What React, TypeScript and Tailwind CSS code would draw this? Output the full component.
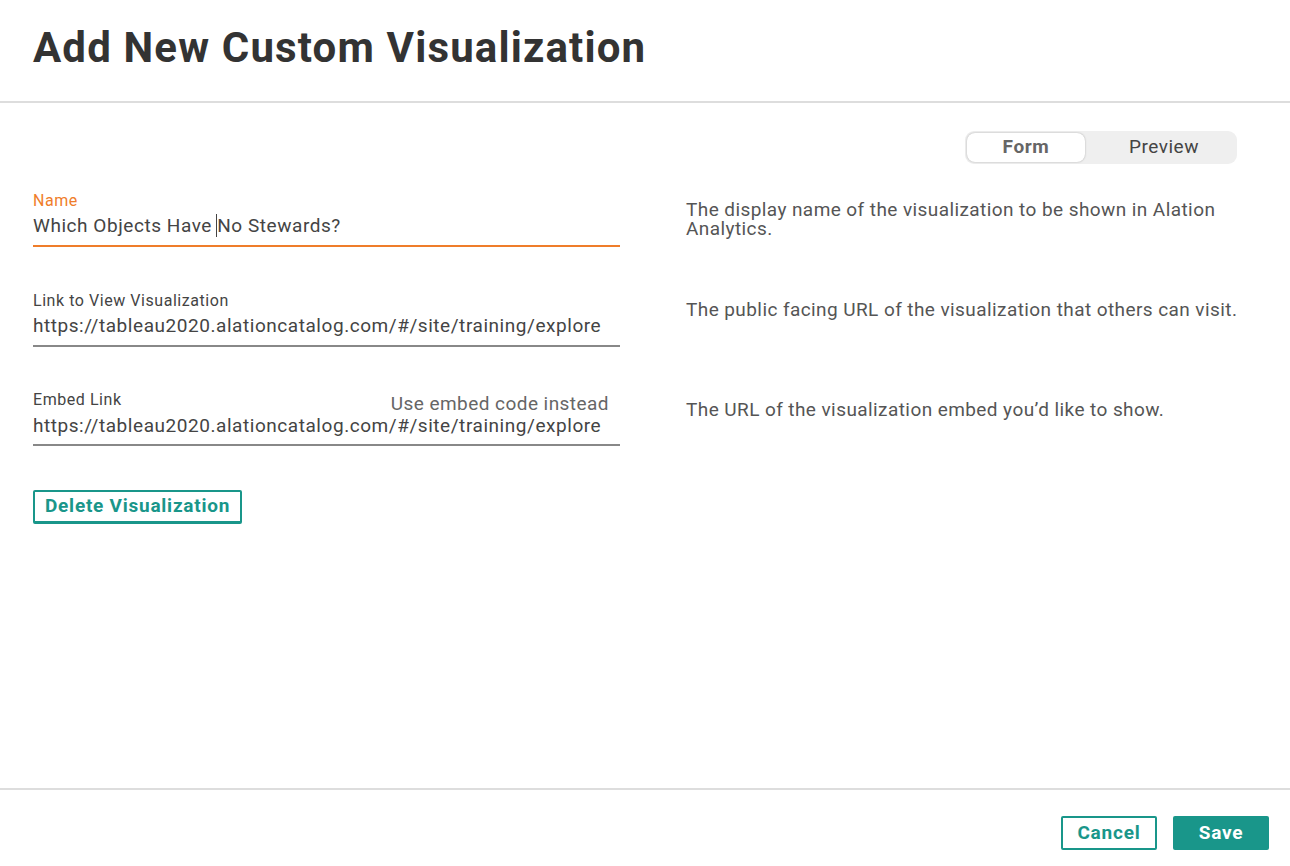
import React from "react";

const teal = "#19968a";

export default function App() {
  return (
    <div className="w-[1290px] h-[866px] bg-white flex flex-col text-[#444]" style={{ fontFamily: "Roboto, 'Liberation Sans', sans-serif" }}>
      <div className="h-[103px] border-b-2 border-[#dddddd] pl-[33px] pt-[22px]">
        <h1 className="text-[42px] leading-[52px] font-bold text-[#333] tracking-[1.15px]">Add New Custom Visualization</h1>
      </div>
      <div className="flex-1 flex flex-col pl-[33px] pr-[20px]">
        <div className="flex justify-end pt-[28px] pr-[33px]">
          <div className="flex items-center h-[33px] w-[272px] bg-[#efefef] rounded-[9px] p-[2px]">
            <div className="h-[29px] w-[118px] bg-white rounded-[8px] shadow-[0_0_2px_rgba(0,0,0,0.3)] flex items-center justify-center text-[19px] font-bold tracking-[0.6px] text-[#666]">Form</div>
            <div className="flex-1 flex items-center justify-center pl-[8px] text-[19px] tracking-[0.5px] text-[#444]">Preview</div>
          </div>
        </div>
        <div className="flex mt-[27px]">
          <div className="w-[587px] flex flex-col tracking-[0.55px]">
            <div>
              <div className="text-[16px] leading-[20px] text-[#ef7d2a]">Name</div>
              <div className="text-[19px] leading-[26px] text-[#444] border-b-2 border-[#ef7d2a] pb-[6px] pt-[2px]">Which Objects Have <span className="border-l border-[#444] -ml-[1px]">No Stewards?</span></div>
            </div>
            <div className="mt-[44px]">
              <div className="text-[16px] leading-[20px] text-[#444]">Link to View Visualization</div>
              <div className="text-[19px] leading-[26px] text-[#444] border-b-2 border-[#888] pb-[6px] pt-[2px]">https://tableau2020.alationcatalog.com/#/site/training/explore</div>
            </div>
            <div className="mt-[43px]">
              <div className="flex justify-between items-start h-[20px] pr-[11px]">
                <span className="text-[16px] leading-[20px] text-[#444]">Embed Link</span>
                <span className="text-[19px] leading-[20px] tracking-[0.45px] text-[#666] mt-[4px]">Use embed code instead</span>
              </div>
              <div className="text-[19px] leading-[26px] text-[#444] border-b-2 border-[#888] pb-[5px] pt-[3px]">https://tableau2020.alationcatalog.com/#/site/training/explore</div>
            </div>
            <div className="mt-[44px]">
              <button className="h-[34px] px-[10px] border-2 border-b-[3px] border-[#19968a] rounded-[2px] text-[19px] font-bold tracking-[0.75px] text-[#19968a] bg-white">Delete Visualization</button>
            </div>
          </div>
          <div className="flex-1 pl-[66px] text-[19px] tracking-[0.42px] text-[#555]">
            <div className="h-[100px] pt-[9px] leading-[19px] pr-[33px]">The display name of the visualization to be shown in Alation Analytics.</div>
            <div className="h-[100px] pt-[9px] leading-[19px] whitespace-nowrap">The public facing URL of the visualization that others can visit.</div>
            <div className="h-[100px] pt-[9px] leading-[19px]">The URL of the visualization embed you’d like to show.</div>
          </div>
        </div>
      </div>
      <div className="h-[78px] border-t-2 border-[#dddddd] flex items-start justify-end gap-[16px] pr-[21px] pt-[26px]">
        <button className="h-[34px] w-[96px] border-2 rounded-[2px] text-[19px] leading-[28px] font-bold tracking-[0.8px] bg-white" style={{ borderColor: teal, color: teal }}>Cancel</button>
        <button className="h-[34px] w-[96px] rounded-[2px] text-[19px] leading-[28px] font-bold tracking-[0.8px] text-white bg-[#19968a]">Save</button>
      </div>
    </div>
  );
}
